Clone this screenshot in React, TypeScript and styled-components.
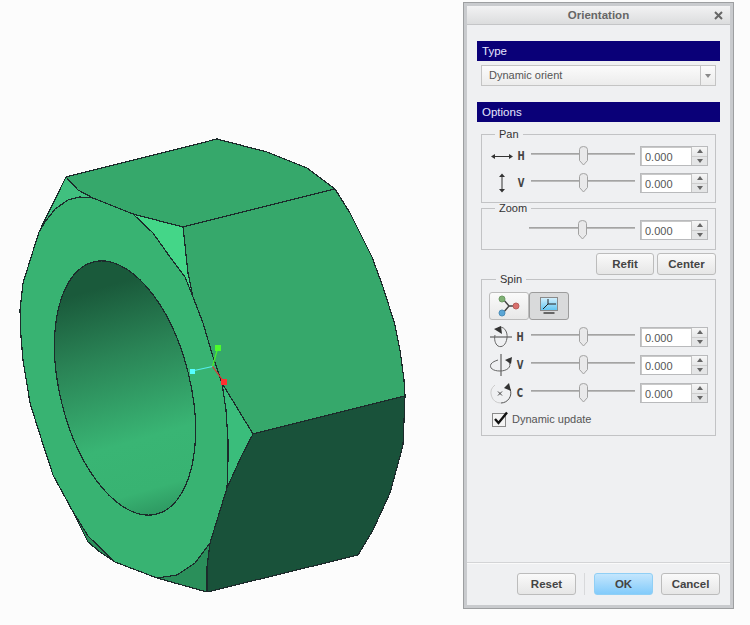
import React from "react";
import styled, { createGlobalStyle } from "styled-components";

const GlobalStyle = createGlobalStyle`
  html, body {
    margin: 0;
    padding: 0;
    background: #fcfcfc;
  }
  body {
    font-family: "Liberation Sans", Arial, sans-serif;
    font-size: 11px;
    color: #444;
  }
`;

const Page = styled.div`
  display: flex;
  align-items: flex-start;
  width: 750px;
  height: 625px;
  overflow: hidden;
`;

const Viewport = styled.svg`
  flex: none;
  display: block;
  width: 463px;
  height: 625px;
`;

const Dialog = styled.section`
  flex: none;
  display: flex;
  flex-direction: column;
  box-sizing: border-box;
  width: 269px;
  height: 605px;
  margin: 3px 0 0 1px;
  background: #eff0f2;
  border: 3px solid #c9cbce;
  box-shadow: 0 0 0 1px #9d9fa1;
`;

const TitleBar = styled.header`
  position: relative;
  flex: none;
  height: 18px;
  line-height: 18px;
  text-align: center;
  font-weight: bold;
  font-size: 11.5px;
  color: #666;
  background: linear-gradient(#f2f2f3, #dcddde);
  border-bottom: 1px solid #c4c5c7;
`;

const CloseGlyph = styled.svg`
  position: absolute;
  top: 5px;
  right: 7px;
  width: 9px;
  height: 9px;
`;

const Body = styled.div`
  flex: 1;
  display: flex;
  flex-direction: column;
  padding: 16px 10px 0;
`;

const SectionBar = styled.div<{ $gap: number }>`
  flex: none;
  height: 20px;
  line-height: 20px;
  margin-top: ${(p) => p.$gap}px;
  padding-left: 5px;
  font-size: 11.5px;
  color: #e6e6ff;
  background: #0a0078;
`;

const Select = styled.div`
  flex: none;
  display: flex;
  box-sizing: border-box;
  height: 21px;
  margin: 4px 4px 0;
  border: 1px solid #c4c4c4;
  background: linear-gradient(#fbfbfb, #ececec);
`;

const SelectValue = styled.span`
  flex: 1;
  line-height: 19px;
  padding-left: 7px;
  color: #555;
`;

const SelectArrow = styled.span`
  flex: none;
  position: relative;
  width: 14px;
  border-left: 1px solid #c4c4c4;
  &::after {
    content: "";
    position: absolute;
    left: 3.5px;
    top: 8px;
    border: 3.5px solid transparent;
    border-top: 4px solid #8a8a8a;
  }
`;

const Group = styled.fieldset<{ $top: number; $bottom: number }>`
  flex: none;
  margin: ${(p) => p.$top}px 4px 0;
  padding: 0 7px ${(p) => p.$bottom}px;
  min-width: 0;
  border: 1px solid #c2c3c5;
`;

const Legend = styled.legend<{ $left: number }>`
  margin-left: ${(p) => p.$left}px;
  padding: 0 4px;
  height: 10px;
  line-height: 10px;
  font-size: 11px;
  color: #333;
`;

const Row = styled.div<{ $top: number }>`
  display: flex;
  align-items: center;
  height: 20px;
  margin-top: ${(p) => p.$top}px;
`;

const IconSlot = styled.span<{ $w: number }>`
  flex: none;
  display: flex;
  align-items: center;
  justify-content: center;
  width: ${(p) => p.$w}px;
`;

const AxisLabel = styled.span<{ $w: number }>`
  flex: none;
  width: ${(p) => p.$w}px;
  text-align: center;
  font-family: "DejaVu Sans", sans-serif;
  font-weight: bold;
  font-size: 12px;
  color: #444;
  transform: scaleX(0.72);
`;

const Slider = styled.div<{ $w: number }>`
  position: relative;
  flex: none;
  display: flex;
  justify-content: center;
  width: ${(p) => p.$w}px;
  margin-left: auto;
  height: 20px;
  &::before {
    content: "";
    position: absolute;
    left: 0;
    right: 0;
    top: 7px;
    height: 2px;
    background: linear-gradient(#989898, #c6c6c6);
  }
`;

const SliderThumb = styled.svg`
  position: relative;
  width: 11px;
  height: 20px;
`;

const Spinner = styled.div`
  flex: none;
  display: flex;
  box-sizing: border-box;
  width: 68px;
  height: 20px;
  margin-left: 5px;
  border: 1px solid #b9babc;
`;

const SpinnerValue = styled.span`
  flex: 1;
  box-sizing: border-box;
  line-height: 18px;
  padding-left: 3px;
  font-size: 11px;
  color: #555;
  background: #fff;
  border: solid #c8c8c8;
  border-width: 1px 0 0 1px;
`;

const SpinnerArrows = styled.div`
  flex: none;
  display: flex;
  flex-direction: column;
  width: 15px;
  border-left: 1px solid #c4c4c4;
`;

const SpinnerArrow = styled.span<{ $down?: boolean }>`
  flex: 1;
  display: flex;
  align-items: center;
  justify-content: center;
  background: ${(p) => (p.$down ? "#e4e5e6" : "linear-gradient(#f6f6f6, #e6e7e8)")};
  border-top: ${(p) => (p.$down ? "1px solid #cdcdcd" : "none")};
  &::after {
    content: "";
    border-left: 3.5px solid transparent;
    border-right: 3.5px solid transparent;
    border-top: ${(p) => (p.$down ? "4px solid #666" : "none")};
    border-bottom: ${(p) => (p.$down ? "none" : "4px solid #666")};
  }
`;

const ButtonRow = styled.div`
  flex: none;
  display: flex;
  justify-content: flex-end;
  gap: 3px;
  margin: 3px 4px 0;
`;

const Button = styled.button<{ $w: number; $primary?: boolean; $gap?: number }>`
  flex: none;
  box-sizing: border-box;
  width: ${(p) => p.$w}px;
  height: 22px;
  padding: 0;
  margin-left: ${(p) => p.$gap ?? 0}px;
  font-family: inherit;
  font-size: 11.5px;
  font-weight: bold;
  color: #444;
  border-radius: 3px;
  border: 1px solid ${(p) => (p.$primary ? "#90cff5" : "#bcbcbc")};
  background: ${(p) =>
    p.$primary
      ? "linear-gradient(#c4e6fd, #82cbfb)"
      : "linear-gradient(#fafafa, #e6e6e6)"};
`;

const ToggleRow = styled.div`
  display: flex;
  margin-top: 8px;
`;

const ToggleButton = styled.span<{ $active?: boolean }>`
  flex: none;
  display: flex;
  align-items: center;
  justify-content: center;
  box-sizing: border-box;
  width: 40px;
  height: 28px;
  border-radius: 3px;
  border: 1px solid ${(p) => (p.$active ? "#9c9c9c" : "#bcbcbc")};
  background: ${(p) => (p.$active ? "#d9dadb" : "linear-gradient(#fafafa, #e8e8e8)")};
`;

const CheckRow = styled.label`
  display: flex;
  align-items: center;
  height: 16px;
  margin: 8px 0 0 3px;
  gap: 3px;
  font-size: 11px;
  color: #555;
`;

const CheckIcon = styled.svg`
  flex: none;
  width: 17px;
  height: 16px;
`;

const Footer = styled.footer`
  flex: none;
  display: flex;
  justify-content: flex-end;
  align-items: flex-start;
  height: 43px;
  padding: 10px 10px 0;
  box-sizing: border-box;
  border-top: 1px solid #d3d4d6;
  box-shadow: inset 0 1px 0 #fafafa;
`;

const FooterDivider = styled.span`
  flex: none;
  width: 1px;
  height: 22px;
  margin: 0 9px 0 8px;
  background: #d8d9db;
`;

type Pt = [number, number];

const toPoints = (pts: Pt[]) => pts.map((p) => p.join(",")).join(" ");

const ringFace: Pt[] = [
  [39, 232], [45, 222], [55, 209], [68, 200], [80, 197], [93, 198], [133, 214], [153, 233],
  [170, 257], [185, 277], [193, 297], [203, 323], [213, 357], [222, 383], [226, 410], [228, 440],
  [228, 460], [227, 488], [218, 520], [210, 543], [195, 563], [177, 575], [157, 578], [115, 562],
  [88, 536], [72, 510], [53, 475], [41, 438], [30, 403], [23, 360], [21, 337], [20, 310], [23, 283],
];

const faces: { fill: string; pts: Pt[] }[] = [
  { fill: "#2a8f5a", pts: [[72, 510], [88, 542], [100, 552], [115, 562], [100, 548], [88, 535]] },
  { fill: "#38b372", pts: ringFace },
  {
    fill: "#36a86b",
    pts: [[66, 177], [217, 139], [267, 152], [307, 168], [323, 180], [335, 189], [183, 227], [133, 214], [93, 198], [78, 190]],
  },
  {
    fill: "#36a86b",
    pts: [
      [183, 227], [335, 189], [350, 213], [372, 257], [383, 287], [395, 325], [400, 350], [404, 380],
      [405, 396], [253, 434], [222, 383], [213, 357], [203, 323], [193, 297], [188, 273],
    ],
  },
  { fill: "#44d688", pts: [[133, 214], [183, 227], [188, 273], [193, 297], [185, 277], [170, 257], [153, 233]] },
  { fill: "#40c07f", pts: [[66, 177], [78, 190], [93, 198], [80, 197], [68, 200], [55, 209], [45, 222], [39, 232]] },
  { fill: "#3abd7b", pts: [[222, 383], [253, 434], [242, 455], [227, 488], [228, 460], [228, 440], [226, 410]] },
  {
    fill: "#19523a",
    pts: [
      [253, 434], [405, 396], [403, 445], [390, 493], [373, 530], [358, 555], [207, 592], [207, 567],
      [210, 543], [227, 488], [242, 455],
    ],
  },
  { fill: "#2a8f5a", pts: [[157, 578], [177, 575], [195, 563], [210, 543], [207, 567], [207, 592]] },
];

const NutModel = () => (
  <Viewport viewBox="0 0 463 625">
    <defs>
      <linearGradient id="bore" gradientUnits="userSpaceOnUse" x1="120" y1="285" x2="128" y2="515">
        <stop offset="0" stopColor="#1a5a3b" />
        <stop offset="0.3" stopColor="#2a8456" />
        <stop offset="0.68" stopColor="#39b574" />
        <stop offset="0.9" stopColor="#38b372" />
        <stop offset="1" stopColor="#2f9c64" />
      </linearGradient>
    </defs>
    <g stroke="#1c2b2b" strokeWidth="1.2" strokeLinejoin="round" shapeRendering="crispEdges">
      {faces.map((f, i) => (
        <polygon key={i} points={toPoints(f.pts)} fill={f.fill} />
      ))}
      <ellipse cx="125" cy="388" rx="65" ry="130" transform="rotate(-14 125 388)" fill="url(#bore)" />
    </g>
    <path d="M212.5 366.5 L217.5 349" stroke="#4cf02c" strokeWidth="1.2" fill="none" />
    <path d="M212.5 366.5 L192 371" stroke="#55eeee" strokeWidth="1.2" fill="none" />
    <path d="M212.5 366.5 L224 382" stroke="#e83030" strokeWidth="1.2" fill="none" />
    <rect x="215" y="345" width="6" height="6" fill="#4dfb2c" />
    <rect x="190" y="369" width="5" height="5" fill="#55ffff" />
    <rect x="221" y="379" width="6" height="6" fill="#ff3030" />
  </Viewport>
);

const Thumb = () => (
  <SliderThumb viewBox="0 0 11 20">
    <path
      d="M1.5 3.5 Q1.5 0.5 5.5 0.5 Q9.5 0.5 9.5 3.5 V14.5 L5.5 19 L1.5 14.5 Z"
      fill="#e9e9ea"
      stroke="#a2a2a2"
    />
  </SliderThumb>
);

const ValueSpinner = () => (
  <Spinner>
    <SpinnerValue>0.000</SpinnerValue>
    <SpinnerArrows>
      <SpinnerArrow />
      <SpinnerArrow $down />
    </SpinnerArrows>
  </Spinner>
);

const PanHIcon = () => (
  <svg width="24" height="9" viewBox="0 0 24 9">
    <path d="M2 4.5 H22" stroke="#333" fill="none" />
    <path d="M1 4.5 L5 2 V7 Z M23 4.5 L19 2 V7 Z" fill="#333" />
  </svg>
);

const PanVIcon = () => (
  <svg width="10" height="20" viewBox="0 0 10 20">
    <path d="M5 2 V18" stroke="#333" fill="none" />
    <path d="M5 0.5 L2 4 H8 Z M5 19.5 L2 16 H8 Z" fill="#333" />
  </svg>
);

const SpinHIcon = () => (
  <svg width="24" height="22" viewBox="0 0 24 22">
    <path d="M1 11 H23" stroke="#444" fill="none" />
    <path d="M9 2 C14 -1 19 5 18 12 C17 19 13 22 9 20 C6 18 5 13 6 9" fill="none" stroke="#666" />
    <path d="M13 8 L5 3 L12 0 Z" fill="#333" />
  </svg>
);

const SpinVIcon = () => (
  <svg width="24" height="22" viewBox="0 0 24 22">
    <path d="M12 0 V22" stroke="#444" fill="none" />
    <path d="M20 8 C23 13 18 17 11 17 C4 17 0 14 2 10 C3.500 8 6 7 9 6" fill="none" stroke="#666" />
    <path d="M23 3 L22 10 L16 6 Z" fill="#333" />
  </svg>
);

const SpinCIcon = () => (
  <svg width="24" height="22" viewBox="0 0 24 22">
    <path d="M6 3 A10 10 0 0 0 12 21" fill="none" stroke="#ccc" />
    <path d="M12 21 A10 10 0 0 0 21 7" fill="none" stroke="#555" />
    <path d="M20 1 L22 9 L15 6 Z" fill="#333" />
    <path d="M9 9.500 L13 13.500 M13 9.500 L9 13.500" stroke="#444" fill="none" />
  </svg>
);

const AxesIcon = () => (
  <svg width="26" height="24" viewBox="0 0 26 24">
    <path d="M13 12 L7 5 M13 12 L7 19 M13 12 H20" stroke="#444" strokeWidth="1.4" fill="none" />
    <circle cx="6" cy="5" r="3" fill="#7fb174" stroke="#6d9a64" />
    <circle cx="20" cy="12" r="3" fill="#d9706d" stroke="#b95f5c" />
    <circle cx="6" cy="19" r="3" fill="#5aa6d6" stroke="#4b8db8" />
  </svg>
);

const ScreenIcon = () => (
  <svg width="20" height="20" viewBox="0 0 20 20">
    <defs>
      <linearGradient id="screen" x1="0" y1="0" x2="0" y2="1">
        <stop offset="0" stopColor="#d4f0fd" />
        <stop offset="1" stopColor="#5ec4f1" />
      </linearGradient>
    </defs>
    <rect x="1.500" y="1.500" width="17" height="13" fill="url(#screen)" stroke="#8a8a8a" />
    <path d="M9 3 V8 L17 8 M9 8 L4 13" stroke="#222" fill="none" />
    <rect x="4.500" y="16" width="11" height="2" fill="#666" />
  </svg>
);

const App: React.FC = () => {
  return (
    <>
      <GlobalStyle />
      <Page>
        <NutModel />
        <Dialog>
          <TitleBar>
            Orientation
            <CloseGlyph viewBox="0 0 9 9">
              <path d="M1 1 L8 8 M8 1 L1 8" stroke="#666" strokeWidth="2" fill="none" />
            </CloseGlyph>
          </TitleBar>
          <Body>
            <SectionBar $gap={0}>Type</SectionBar>
            <Select>
              <SelectValue>Dynamic orient</SelectValue>
              <SelectArrow />
            </Select>
            <SectionBar $gap={16}>Options</SectionBar>

            <Group $top={7} $bottom={9}>
              <Legend $left={6}>Pan</Legend>
              <Row $top={7}>
                <IconSlot $w={26}><PanHIcon /></IconSlot>
                <AxisLabel $w={12}>H</AxisLabel>
                <Slider $w={104}><Thumb /></Slider>
                <ValueSpinner />
              </Row>
              <Row $top={7}>
                <IconSlot $w={26}><PanVIcon /></IconSlot>
                <AxisLabel $w={12}>V</AxisLabel>
                <Slider $w={104}><Thumb /></Slider>
                <ValueSpinner />
              </Row>
            </Group>

            <Group $top={0} $bottom={9}>
              <Legend $left={6}>Zoom</Legend>
              <Row $top={7}>
                <Slider $w={106}><Thumb /></Slider>
                <ValueSpinner />
              </Row>
            </Group>

            <ButtonRow>
              <Button $w={58}>Refit</Button>
              <Button $w={59}>Center</Button>
            </ButtonRow>

            <Group $top={-1} $bottom={8}>
              <Legend $left={7}>Spin</Legend>
              <ToggleRow>
                <ToggleButton><AxesIcon /></ToggleButton>
                <ToggleButton $active><ScreenIcon /></ToggleButton>
              </ToggleRow>
              <Row $top={7}>
                <IconSlot $w={24}><SpinHIcon /></IconSlot>
                <AxisLabel $w={14}>H</AxisLabel>
                <Slider $w={104}><Thumb /></Slider>
                <ValueSpinner />
              </Row>
              <Row $top={8}>
                <IconSlot $w={24}><SpinVIcon /></IconSlot>
                <AxisLabel $w={14}>V</AxisLabel>
                <Slider $w={104}><Thumb /></Slider>
                <ValueSpinner />
              </Row>
              <Row $top={8}>
                <IconSlot $w={24}><SpinCIcon /></IconSlot>
                <AxisLabel $w={14}>C</AxisLabel>
                <Slider $w={104}><Thumb /></Slider>
                <ValueSpinner />
              </Row>
              <CheckRow>
                <CheckIcon viewBox="0 0 17 16">
                  <rect x="0.500" y="2.500" width="13" height="13" fill="#f4f4f4" stroke="#8a8a8a" />
                  <path d="M3 8 L6.500 12 L15 1.500" stroke="#111" strokeWidth="2.4" fill="none" />
                </CheckIcon>
                Dynamic update
              </CheckRow>
            </Group>
          </Body>
          <Footer>
            <Button $w={59}>Reset</Button>
            <FooterDivider />
            <Button $w={59} $primary>OK</Button>
            <Button $w={59} $gap={8}>Cancel</Button>
          </Footer>
        </Dialog>
      </Page>
    </>
  );
};

export default App;
